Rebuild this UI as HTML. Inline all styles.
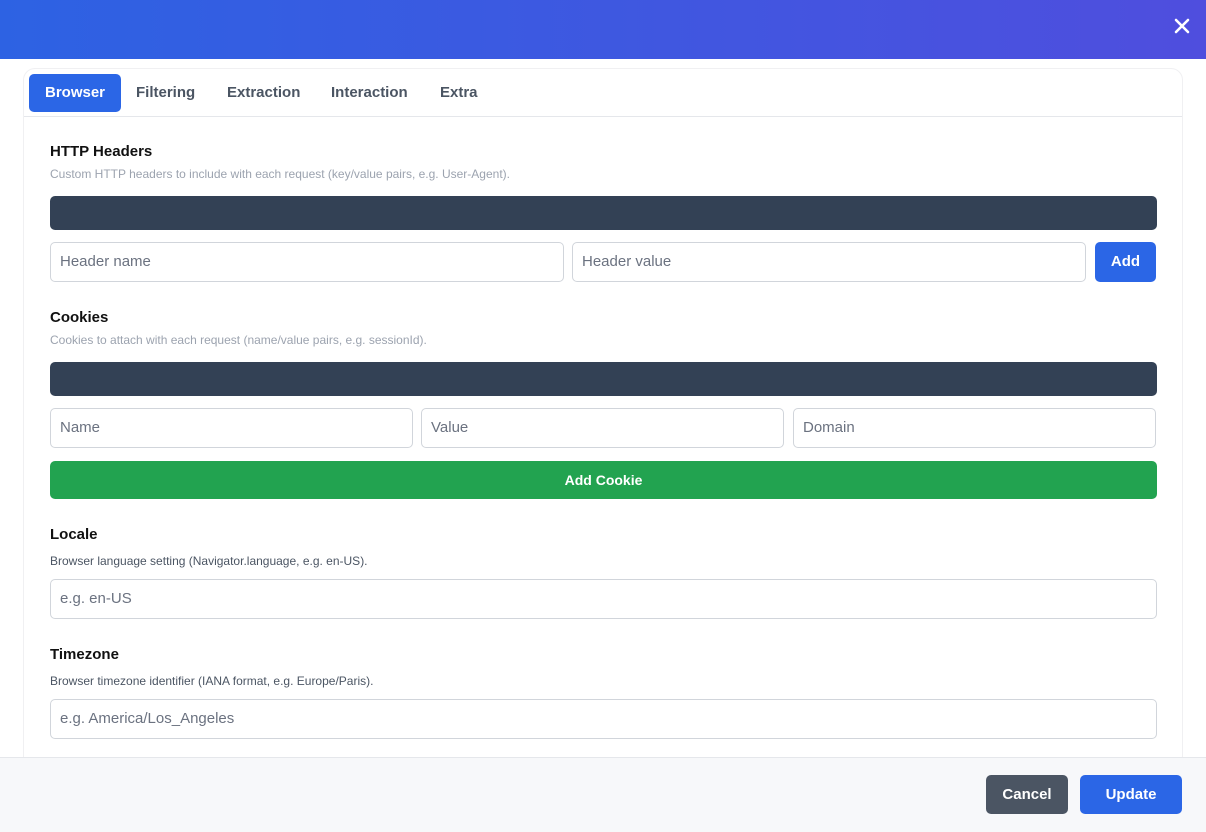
<!DOCTYPE html>
<html><head><style>
*{box-sizing:border-box;margin:0;padding:0}
body{width:1206px;height:832px;overflow:hidden;background:#fff;font-family:"Liberation Sans",sans-serif;position:relative}
.hdr{position:absolute;left:0;top:0;width:1206px;height:59px;background:linear-gradient(90deg,#2d62e3,#4f4ede)}
.x{position:absolute;right:16px;top:18px;width:16px;height:16px}
.card{position:absolute;left:23px;top:68px;width:1160px;height:700px;border:1px solid #f0f0f2;border-radius:12px;background:#fff}
.tabs{height:48px;border-bottom:1px solid #e5e7eb;position:relative}
.tab{position:absolute;top:5px;height:38px;line-height:38px;font-size:15px;font-weight:bold;color:#4b5563}
.tab.a{background:#2b66e6;color:#fff;border-radius:5px;padding:0 16px;left:5px}
.lbl{position:absolute;left:50px;font-size:15px;font-weight:bold;color:#111}
.desc{position:absolute;left:50px;font-size:12px;color:#9ca3af}
.desc.d{color:#4b5563}
.dark{position:absolute;left:50px;width:1107px;height:34px;background:#334155;border-radius:5px}
.inp{position:absolute;height:40px;border:1px solid #d1d5db;border-radius:5px;font-size:15px;color:#6b7280;padding-left:9px;line-height:38px}
.btn{position:absolute;border-radius:5px;color:#fff;font-weight:bold;font-size:15px;text-align:center}
.foot{position:absolute;left:0;top:757px;width:1206px;height:75px;background:#f7f8fa;border-top:1px solid #e5e7eb}
</style></head><body>
<div class="hdr"><svg class="x" viewBox="0 0 16 16"><path d="M2 2L14 14M14 2L2 14" stroke="#fff" stroke-width="2.6" stroke-linecap="round"/></svg></div>
<div class="card"><div class="tabs">
<div class="tab a">Browser</div><div class="tab" style="left:112px">Filtering</div><div class="tab" style="left:203px">Extraction</div><div class="tab" style="left:307px">Interaction</div><div class="tab" style="left:416px">Extra</div>
</div></div>
<div class="lbl" style="top:143px">HTTP Headers</div>
<div class="desc" style="top:167px">Custom HTTP headers to include with each request (key/value pairs, e.g. User-Agent).</div>
<div class="dark" style="top:196px"></div>
<div class="inp" style="left:50px;top:242px;width:514px">Header name</div>
<div class="inp" style="left:572px;top:242px;width:514px">Header value</div>
<div class="btn" style="left:1095px;top:242px;width:61px;height:40px;line-height:40px;background:#2b66e6">Add</div>
<div class="lbl" style="top:309px">Cookies</div>
<div class="desc" style="top:333px">Cookies to attach with each request (name/value pairs, e.g. sessionId).</div>
<div class="dark" style="top:362px"></div>
<div class="inp" style="left:50px;top:408px;width:363px">Name</div>
<div class="inp" style="left:421px;top:408px;width:363px">Value</div>
<div class="inp" style="left:793px;top:408px;width:363px">Domain</div>
<div class="btn" style="left:50px;top:461px;width:1107px;height:38px;line-height:38px;background:#22a350;font-size:14px">Add Cookie</div>
<div class="lbl" style="top:526px">Locale</div>
<div class="desc d" style="top:554px">Browser language setting (Navigator.language, e.g. en-US).</div>
<div class="inp" style="left:50px;top:579px;width:1107px">e.g. en-US</div>
<div class="lbl" style="top:646px">Timezone</div>
<div class="desc d" style="top:674px">Browser timezone identifier (IANA format, e.g. Europe/Paris).</div>
<div class="inp" style="left:50px;top:699px;width:1107px">e.g. America/Los_Angeles</div>
<div class="foot">
<div class="btn" style="left:986px;top:17px;width:82px;height:39px;line-height:39px;background:#4b5563">Cancel</div>
<div class="btn" style="left:1080px;top:17px;width:102px;height:39px;line-height:39px;background:#2b66e6">Update</div>
</div>
</body></html>
